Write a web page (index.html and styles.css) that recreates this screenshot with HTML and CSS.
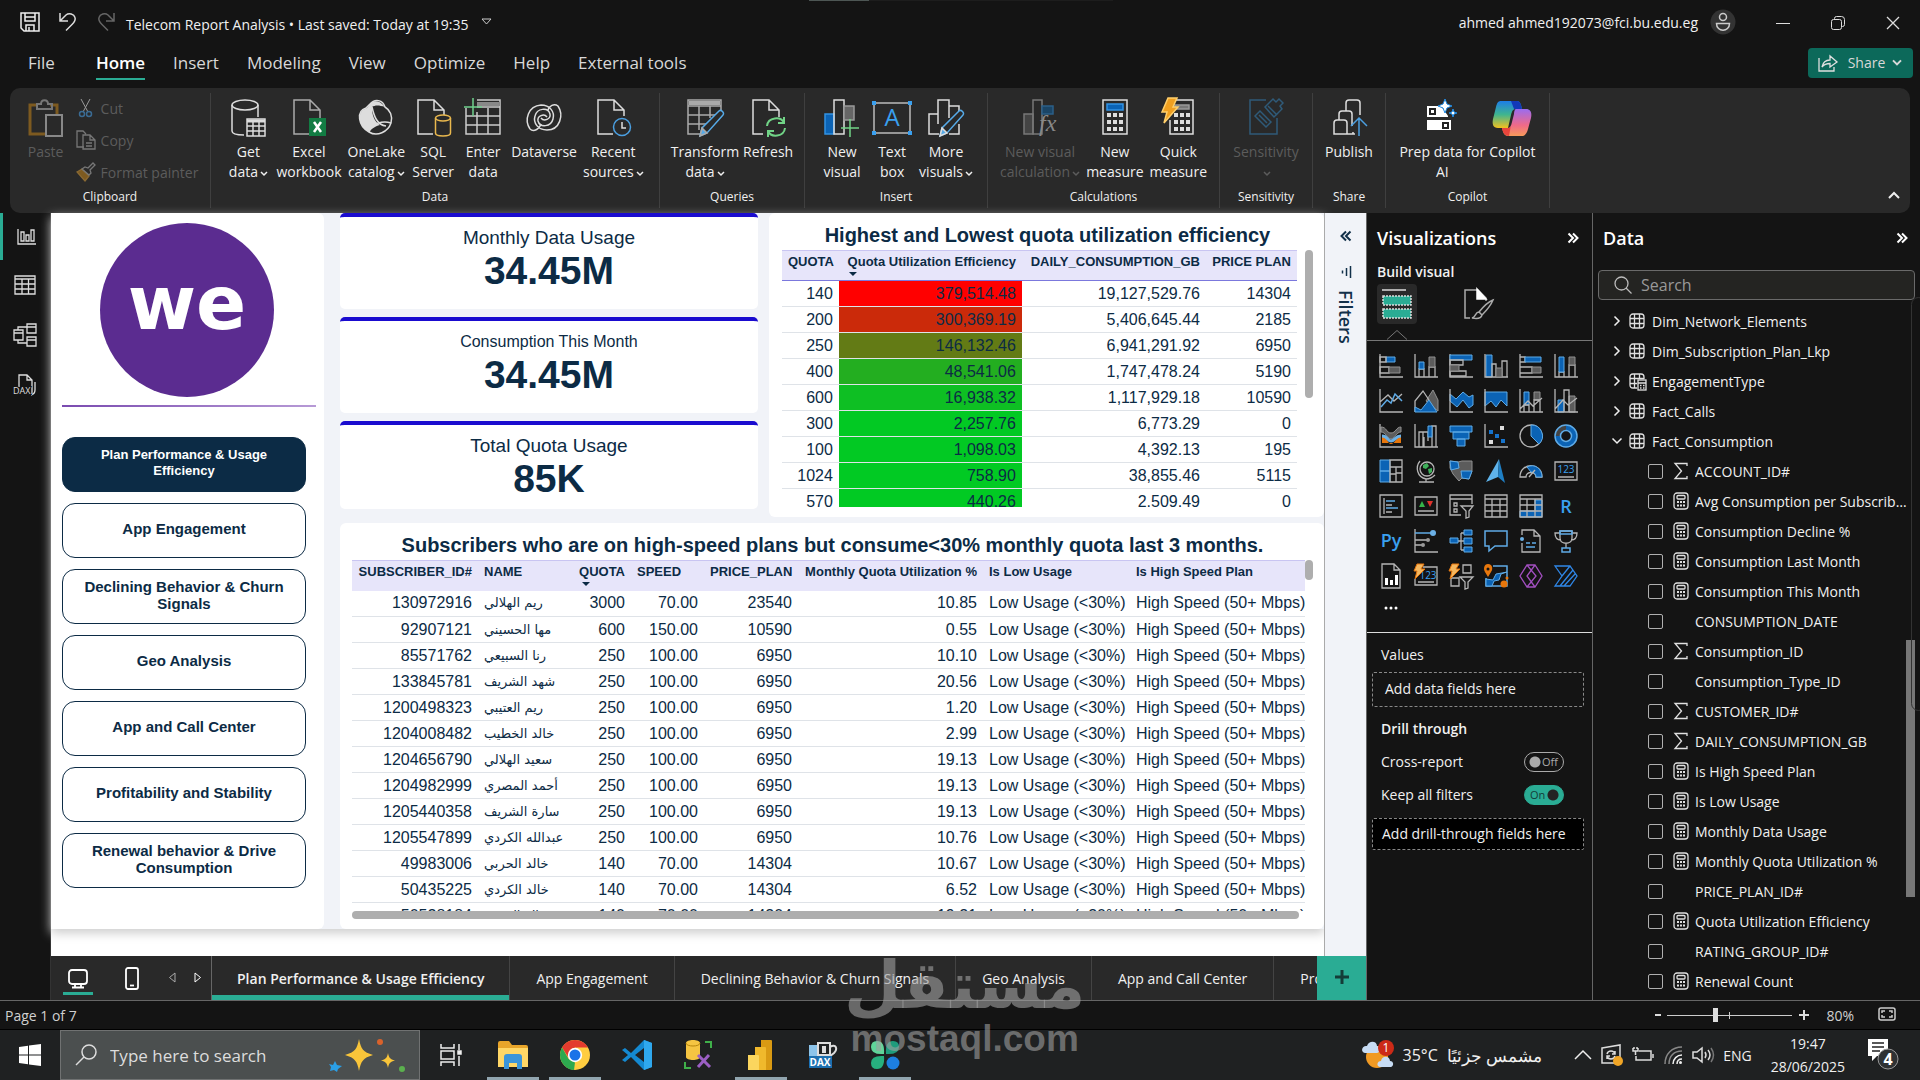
FILE: index.html
```html
<!DOCTYPE html>
<html lang="en">
<head>
  <meta charset="utf-8">
  <title>Telecom Report Analysis</title>
  <meta name="viewport" content="width=device-width, initial-scale=1">
  <link rel="stylesheet" href="styles.css">
</head>
<body>
  <!-- Shared icons -->
  <svg class="defs" width="0" height="0">
    <symbol id="chev" viewBox="0 0 8 6"><path d="M1 1l3 3 3-3" fill="none" stroke="currentColor" stroke-width="1.5"/></symbol>
    <symbol id="dbl" viewBox="0 0 12 12"><path d="M1.5 1.5L6 6l-4.500 4.500M6 1.500L10.500 6 6 10.500" fill="none" stroke="currentColor" stroke-width="2"/></symbol>
    <symbol id="arrow" viewBox="0 0 8 12"><path d="M1.500 1.500L6 6l-4.500 4.500" fill="none" stroke="currentColor" stroke-width="1.500"/></symbol>
    <symbol id="tbl" viewBox="0 0 16 16"><rect x="1" y="1" width="14" height="14" rx="3"/><path d="M5.500 1v14M10.500 1v14M1 5.500h14M1 10.500h14"/></symbol>
    <symbol id="calc" viewBox="0 0 16 18"><rect x="1" y="1" width="14" height="16" rx="3"/><rect x="4" y="3.500" width="8" height="3.500" rx="1"/><path d="M4 10h2M7 10h2M10 10h2M4 13.500h2M7 13.500h2M10 13.500h2" stroke-width="2"/></symbol>
    <symbol id="sum" viewBox="0 0 16 18"><path d="M14 4V1.500H2L8.500 9 2 16.500h12V14"/></symbol>
  </svg>

  <header class="titlebar">
    <div class="quick">
      <button aria-label="Save"><svg width="20" height="20" viewBox="0 0 20 20" fill="none" stroke="#eee" stroke-width="1.5"><path d="M1 1h18v18H4l-3-3zM5 1v8h10V1M6 19v-6h8v6M9 15v4M5 5h10"/></svg></button>
      <button aria-label="Undo"><svg width="20" height="20" viewBox="0 0 20 20" fill="none" stroke="#ddd" stroke-width="1.5"><path d="M2 1v8h8M2 9l6-6c3-2.500 8-1 9 2.500 1 3-1 5-3 7l-6 6"/></svg></button>
      <button aria-label="Redo"><svg width="20" height="20" viewBox="0 0 20 20" fill="none" stroke="#666" stroke-width="1.5"><path d="M18 1v8h-8M18 9l-6-6C9 .500 4 2 3 5.500c-1 3 1 5 3 7l6 6"/></svg></button>
    </div>
    <div class="doc-name">Telecom Report Analysis • Last saved: Today at 19:35</div>
    <svg class="doc-caret" width="12" height="8" viewBox="0 0 12 8" fill="none" stroke="#ccc"><path d="M1 1h9L5.500 6z"/></svg>
    <div class="edge"></div>
    <div class="account">ahmed ahmed192073@fci.bu.edu.eg
      <svg width="26" height="26" viewBox="0 0 26 26" fill="none" stroke="#ccc" stroke-width="1.5"><circle cx="13" cy="13" r="12.500" fill="#333" stroke="none"/><circle cx="13" cy="8" r="3.500"/><path d="M6.500 14.500h13c0 9-13 9-13 0z"/></svg>
    </div>
    <div class="win">
      <button aria-label="Minimize"><svg width="14" height="14" viewBox="0 0 14 14" stroke="#ddd"><path d="M0 7.500h14"/></svg></button>
      <button aria-label="Restore"><svg width="14" height="14" viewBox="0 0 14 14" fill="none" stroke="#ddd"><rect x=".5" y="3.500" width="10" height="10" rx="2"/><path d="M3.500 3.500V2.500q0-2 2-2h5q3 0 3 3v5q0 2-2 2h-1"/></svg></button>
      <button aria-label="Close"><svg width="14" height="14" viewBox="0 0 14 14" stroke="#ddd" stroke-width="1.3"><path d="M1 1l12 12M13 1L1 13"/></svg></button>
    </div>
  </header>

  <nav class="menu">
    <a href="#">File</a>
    <a href="#" class="on">Home</a>
    <a href="#">Insert</a>
    <a href="#">Modeling</a>
    <a href="#">View</a>
    <a href="#">Optimize</a>
    <a href="#">Help</a>
    <a href="#">External tools</a>
    <button class="share"><svg width="20" height="18" viewBox="0 0 20 18" fill="none" stroke="#e0e0e0" stroke-width="1.300"><path d="M1 4v13h15v-4M4 13c1-5 4-7 8-7V2l7 6-7 5V9.500c-4 0-6 1-8 3.500z"/></svg>Share<svg width="12" height="8"><use href="#chev"/></svg></button>
  </nav>

  <div class="ribbon">
    <section class="group g-clip">
      <div class="items">
        <button class="rb off"><svg width="36" height="40" viewBox="0 0 36 40" fill="none" stroke-width="2"><path d="M8 7H2v29h16M22 7h7v9" stroke="#7d5a20" stroke-width="3"/><path d="M9 11V6h4c0-5 7-5 7 0h4v5z" stroke="#777"/><rect x="18" y="17" width="16" height="21" stroke="#888"/></svg>Paste</button>
        <div class="stack">
          <button class="off"><svg width="16" height="20" viewBox="0 0 16 20" fill="none" stroke="#999"><path d="M3 1l7 13M12 1L5 14"/><g stroke="#3a6b93" stroke-width="1.500"><circle cx="4" cy="16" r="2.500"/><circle cx="11" cy="16" r="2.500"/></g></svg>Cut</button>
          <button class="off"><svg width="20" height="20" viewBox="0 0 20 20" fill="none" stroke="#777" stroke-width="1.300"><path d="M8 17H1V1h6l3 3M7 5h7l5 5v9H7zM14 5v5h5M10 13h6M10 16h6"/></svg>Copy</button>
          <button class="off"><svg width="20" height="20" viewBox="0 0 20 20" fill="none" stroke="#777" stroke-width="1.300"><path d="M1 10l5-3 7 7-4 5z" fill="#7d5a20" stroke="#8a6a34"/><path d="M6 7l3-2 3 1 5-5 2 2-5 5 1 3-2 2z"/></svg>Format painter</button>
        </div>
      </div>
      <h2>Clipboard</h2>
    </section>
    <section class="group g-data">
      <div class="items">
        <button class="rb"><svg width="36" height="40" viewBox="0 0 36 40" fill="none" stroke="#ddd" stroke-width="1.500"><ellipse cx="15" cy="7" rx="13" ry="5"/><path d="M2 7v26c0 3 6 4 12 4M28 7v12"/><rect x="17" y="21" width="18" height="17"/><path d="M17 23h18" stroke-width="3"/><path d="M17 28h18M17 33h18M23 24v14M29 24v14"/></svg><span>Get<br>data<svg class="dn"><use href="#chev"/></svg></span></button>
        <button class="rb"><svg width="36" height="40" viewBox="0 0 36 40" fill="none" stroke="#aaa" stroke-width="1.500"><path d="M18 36H3V2h16l10 10v8M19 2v10h10"/><rect x="18" y="20" width="17" height="18" fill="#127c43" stroke="none"/><path d="M23 24l7 10M30 24l-7 10" stroke="#fff" stroke-width="2.500"/></svg><span>Excel<br>workbook</span></button>
        <button class="rb"><svg width="36" height="40" viewBox="0 0 36 40" fill="none" stroke="#ddd" stroke-width="1.500"><path d="M12 6C17 0 25 2 27 9c5 3 8 9 6 16-3 9-14 14-22 9C0 28-2 13 8 10z"/><path d="M12 6c3-4 10-4 15 3-6-2-10-2-13 0 0 8 2 14 8 18-5 1-10 5-11 7C0 28-2 13 9 10z" fill="#ddd" stroke="none"/><path d="M14 9c2 9 5 18 14 19M11 34c3-8 13-12 22-9"/></svg><span>OneLake<br>catalog<svg class="dn"><use href="#chev"/></svg></span></button>
        <button class="rb"><svg width="36" height="40" viewBox="0 0 36 40" fill="none" stroke="#ddd" stroke-width="1.500"><path d="M18 36H3V2h16l10 10v5M19 2v10h10"/><g stroke="#e9b84e"><ellipse cx="28" cy="20" rx="7.500" ry="3"/><path d="M20.500 20v15c0 4 15 4 15 0V20"/></g></svg><span>SQL<br>Server</span></button>
        <button class="rb"><svg width="36" height="40" viewBox="0 0 36 40" fill="none" stroke="#ccc" stroke-width="1.500"><path d="M1 10v26h34V2H12M1 18h34M1 27h34M12 14v22M23 10v26M12 9h23"/><path d="M12 4h23v4H12z" fill="#888" stroke="none"/><path d="M8 0v18M-1 9h18" stroke="#6fd08c"/></svg><span>Enter<br>data</span></button>
        <button class="rb"><svg width="36" height="40" viewBox="0 0 36 40" fill="none" stroke="#ddd" stroke-width="1.500"><path d="M4 31C-2 22 2 8 15 7c9 0 14 7 12 14-2 8-13 9-15 2-1-5 6-8 9-4"/><path d="M32 8c6 9 2 24-11 24-9 0-14-7-12-14 2-8 13-9 15-2 1 5-6 8-9 4M4 31c4 4 10-1 11-5M32 8c-4-3-9 0-10 4"/></svg><span>Dataverse</span></button>
        <button class="rb"><svg width="36" height="40" viewBox="0 0 36 40" fill="none" stroke="#ddd" stroke-width="1.500"><path d="M18 36H3V2h16l10 10v6M19 2v10h10"/><circle cx="27" cy="29" r="8.500" stroke="#4b9fe0"/><path d="M27 24v6h4"/></svg><span>Recent<br>sources<svg class="dn"><use href="#chev"/></svg></span></button>
      </div>
      <h2>Data</h2>
    </section>
    <section class="group g-query">
      <div class="items">
        <button class="rb"><svg width="38" height="40" viewBox="0 0 38 40" fill="none" stroke="#aaa" stroke-width="1.500"><path d="M14 36H2V2h33v10M2 8h33M2 17h27M2 26h19M13 8v24M24 8v12"/><path d="M3 3h31v4H3z" fill="#aaa" stroke="none"/><path d="M14 38l2-8 17-17c2-2 6 2 4 4L21 35z" stroke="#56aae8" fill="#292929"/><path d="M14 38l2-8 5 5z" fill="#56aae8"/></svg><span>Transform<br>data<svg class="dn"><use href="#chev"/></svg></span></button>
        <button class="rb"><svg width="36" height="40" viewBox="0 0 36 40" fill="none" stroke="#ddd" stroke-width="1.500"><path d="M13 36H3V2h16l10 10v7M19 2v10h10"/><path d="M17 28c1-9 14-10 17-3M34 19v6h-6M35 30c-1 9-14 10-17 3M18 39v-6h6" stroke="#71d487" stroke-width="2"/></svg><span>Refresh</span></button>
      </div>
      <h2>Queries</h2>
    </section>
    <section class="group g-insert">
      <div class="items">
        <button class="rb"><svg width="38" height="40" viewBox="0 0 38 40" fill="none" stroke="#ddd" stroke-width="1.500"><path d="M2 16h9v20H2z" fill="#0b63b5" stroke="#3293e3"/><path d="M11 36V2h10v34z"/><path d="M21 8h10v14H21z" fill="#666" stroke="#999"/><path d="M27 21v18M18 30h18" stroke="#71d487"/></svg><span>New<br>visual</span></button>
        <button class="rb"><svg width="40" height="40" viewBox="0 0 40 40" fill="none" stroke="#bbb" stroke-width="1.500"><path d="M2 5h36v30H2z"/><path d="M0 3h4v4H0zM36 3h4v4h-4zM0 33h4v4H0zM36 33h4v4h-4z" fill="#3aa0ef" stroke="none"/><text x="20" y="28" text-anchor="middle" class="box-a">A</text></svg><span>Text<br>box</span></button>
        <button class="rb"><svg width="38" height="40" viewBox="0 0 38 40" fill="none" stroke="#ddd" stroke-width="1.500"><path d="M12 36H2V16h9M11 26V2h11v18M22 8h10v5M32 26v10H22"/><path d="M13 38l2-8 17-17c2-2 6 2 4 4L20 35z" stroke="#56aae8" fill="#292929"/><path d="M13 38l2-8 5 5z" fill="#56aae8"/></svg><span>More<br>visuals<svg class="dn"><use href="#chev"/></svg></span></button>
      </div>
      <h2>Insert</h2>
    </section>
    <section class="group g-calc">
      <div class="items">
        <button class="rb off"><svg width="36" height="40" viewBox="0 0 36 40" fill="none" stroke="#777" stroke-width="1.500"><path d="M2 16h9v20H2z" fill="#444"/><path d="M11 36V2h9v34z"/><path d="M20 8h11v8H20z" fill="#1b4566" stroke="#2b5f88"/><text x="17" y="33" class="fx">fx</text></svg><span>New visual<br>calculation<svg class="dn"><use href="#chev"/></svg></span></button>
        <button class="rb"><svg width="28" height="40" viewBox="0 0 28 40" fill="none" stroke="#ddd" stroke-width="1.500"><path d="M2 2h24v34H2z"/><path d="M6 6h16v6H6z" fill="#0b63b5" stroke="#3293e3"/><path d="M6 17h16M6 24h16M6 31h16" stroke-width="4" stroke-dasharray="4 2"/></svg><span>New<br>measure</span></button>
        <button class="rb"><svg width="34" height="40" viewBox="0 0 34 40" fill="none" stroke="#ddd" stroke-width="1.500"><path d="M10 2h22v34H9V22"/><path d="M14 7h14v4H14z" fill="#777" stroke="#999"/><path d="M13 17h16M13 24h16M13 31h16" stroke-width="4" stroke-dasharray="4 2"/><path d="M7 0h9l-4 9h5L3 25l3-11H1z" fill="#f0a020" stroke="#ffcf6b"/></svg><span>Quick<br>measure</span></button>
      </div>
      <h2>Calculations</h2>
    </section>
    <section class="group g-sens">
      <div class="items">
        <button class="rb off"><svg width="36" height="40" viewBox="0 0 36 40" fill="none" stroke="#2f5a78" stroke-width="1.500"><path d="M18 2H2v34h27V20M7 18l5-5 11 11-5 5zM17 9l8-8 3 3 3-3 4 4-3 3 2 3-8 8z"/><path d="M11 17l8 8M20 8l9 9"/></svg><span>Sensitivity<br><svg class="dn"><use href="#chev"/></svg></span></button>
      </div>
      <h2>Sensitivity</h2>
    </section>
    <section class="group g-share">
      <div class="items">
        <button class="rb"><svg width="36" height="40" viewBox="0 0 36 40" fill="none" stroke="#ddd" stroke-width="1.500"><path d="M24 36H3V25q0-3 3-3h7q3 0 3 3v11M8 22v-6q0-3 3-3h7q3 0 3 3v12M15 13V5q0-3 3-3h8q3 0 3 3v12M22 34v2"/><path d="M28 38V20M20 28l8-8 8 8" stroke="#4b9fe0"/></svg><span>Publish</span></button>
      </div>
      <h2>Share</h2>
    </section>
    <section class="group g-copilot">
      <div class="items">
        <button class="rb"><svg width="34" height="40" viewBox="0 0 34 40"><path d="M2 8h14l3 4 4 6v1H2zM2 22h24v10H2z" fill="#fff"/><path d="M5 11h5v5H5zM18 25h5v5h-5z" fill="#fff" stroke="#222" stroke-width="2"/><path d="M20 1l2 5 5 2-5 2-2 5-2-5-5-2 5-2zM28 11l1 3 3 1-3 1-1 3-1-3-3-1 3-1z" fill="#fff" stroke="#1b87e0"/></svg><span>Prep data for<br>AI</span></button>
        <button class="rb"><svg width="40" height="40" viewBox="0 0 40 40"><defs><linearGradient id="c1" x1="0" y1="0" x2="0" y2="1"><stop offset="0" stop-color="#1c7de8"/><stop offset=".5" stop-color="#3fb58f"/><stop offset="1" stop-color="#f2c21f"/></linearGradient><linearGradient id="c2" x1="0" y1="0" x2="0" y2="1"><stop offset="0" stop-color="#9a6cf0"/><stop offset=".6" stop-color="#f06a88"/><stop offset="1" stop-color="#f79a5a"/></linearGradient></defs><path d="M9 3h16c3 0 4 3 5 8h-6c-3 0-4 2-5 6l-3 13H6c-5 0-6-4-5-9l3-12c1-4 2-6 5-6z" fill="url(#c1)"/><path d="M19 3h6c3 0 4 3 5 8h-8z" fill="#1238b8"/><path d="M24 11h10c5 0 6 4 5 9l-3 11c-1 4-3 7-6 7H16c-4 0-5-4-6-8h6c2 0 3-2 4-6l2-8c0-3 1-5 2-5z" fill="url(#c2)"/><path d="M10 30h6c2 0 3-1 3-3l-2 11c-5 0-6-4-7-8z" fill="#e8453c"/></svg><span>Copilot</span></button>
      </div>
      <h2>Copilot</h2>
    </section>
    <button class="fold" aria-label="Collapse ribbon"><svg width="12" height="9" viewBox="0 0 12 9" fill="none" stroke="#eee" stroke-width="2"><path d="M1 7l5-5 5 5"/></svg></button>
  </div>

  <main class="work">
    <nav class="rail">
      <button class="on" aria-label="Report view"><svg width="20" height="16" viewBox="0 0 20 16" fill="none" stroke="#ddd" stroke-width="1.300"><path d="M1 0v15h18M4 3h3v9H4zM9 6h3v6H9zM14 1h3v11h-3z"/></svg></button>
      <button aria-label="Table view"><svg width="22" height="20" viewBox="0 0 22 20" fill="none" stroke="#ddd" stroke-width="1.300"><path d="M1 1h20v18H1zM1 4h20M1 9h20M1 14h20M8 4v15M14.500 4v15"/></svg></button>
      <button aria-label="Model view"><svg width="24" height="24" viewBox="0 0 24 24" fill="none" stroke="#ddd" stroke-width="1.300"><path d="M1 7h9v10H1zM1 10h9M14 1h9v9h-9zM14 4h9M14 14h9v9h-9zM14 17h9M5 7V4h9M5 17v3h9"/></svg></button>
      <button aria-label="DAX query view"><svg width="24" height="22" viewBox="0 0 24 22" fill="none" stroke="#ddd" stroke-width="1.300"><path d="M6 13V1h8l5 5v12q0 3-3 2M14 1v5h5M22 8v8q0 4-4 5"/><text x="0" y="20" class="dax">DAX</text></svg></button>
    </nav>

    <div class="center">
      <div class="stage">
        <div class="report">
          <aside class="side">
            <svg class="logo" width="174" height="174" viewBox="0 0 174 174"><circle cx="87" cy="87" r="87" fill="#5b2c90"/><text x="87" y="106" text-anchor="middle">we</text></svg>
            <div class="rule"></div>
            <button class="on">Plan Performance &amp; Usage Efficiency</button>
            <button>App Engagement</button>
            <button>Declining Behavior &amp; Churn Signals</button>
            <button>Geo Analysis</button>
            <button>App and Call Center</button>
            <button>Profitability and Stability</button>
            <button>Renewal behavior &amp; Drive Consumption</button>
          </aside>
          <div class="kpis">
            <div class="kpi"><h3>Monthly Data Usage</h3><p>34.45M</p></div>
            <div class="kpi"><h3 class="sm">Consumption This Month</h3><p>34.45M</p></div>
            <div class="kpi"><h3>Total Quota Usage</h3><p>85K</p></div>
          </div>
          <section class="card eff">
            <h2>Highest and Lowest quota utilization efficiency</h2>
            <div class="scroll">
              <div class="clip">
                <table>
                  <colgroup><col class="e1"><col class="e2"><col><col class="e4"></colgroup>
                  <thead><tr><th>QUOTA</th><th>Quota Utilization Efficiency<i></i></th><th>DAILY_CONSUMPTION_GB</th><th>PRICE PLAN</th></tr></thead>
                  <tbody>
                    <tr><td>140</td><td style="background:#ff0000">379,514.48</td><td>19,127,529.76</td><td>14304</td></tr>
                    <tr><td>200</td><td style="background:#cb2a0a">300,369.19</td><td>5,406,645.44</td><td>2185</td></tr>
                    <tr><td>250</td><td style="background:#637b15">146,132.46</td><td>6,941,291.92</td><td>6950</td></tr>
                    <tr><td>400</td><td style="background:#23ae20">48,541.06</td><td>1,747,478.24</td><td>5190</td></tr>
                    <tr><td>600</td><td style="background:#0ebf23">16,938.32</td><td>1,117,929.18</td><td>10590</td></tr>
                    <tr><td>300</td><td style="background:#02c923">2,257.76</td><td>6,773.29</td><td>0</td></tr>
                    <tr><td>100</td><td style="background:#02c923">1,098.03</td><td>4,392.13</td><td>195</td></tr>
                    <tr><td>1024</td><td style="background:#01ca23">758.90</td><td>38,855.46</td><td>5115</td></tr>
                    <tr><td>570</td><td style="background:#01ca23">440.26</td><td>2.509.49</td><td>0</td></tr>
                  </tbody>
                </table>
              </div>
              <div class="vbar"></div>
            </div>
          </section>
          <section class="card subs">
            <h2>Subscribers who are on high-speed plans but consume&lt;30% monthly quota last 3 months.</h2>
            <div class="scroll">
              <div class="clip">
                <table>
                  <colgroup><col class="s1"><col class="s2"><col class="s3"><col class="s4"><col class="s5"><col class="s6"><col class="s7"><col></colgroup>
                  <thead><tr><th>SUBSCRIBER_ID#</th><th class="l">NAME</th><th>QUOTA<i></i></th><th class="l">SPEED</th><th>PRICE_PLAN</th><th>Monthly Quota Utilization %</th><th class="l">Is Low Usage</th><th class="l">Is High Speed Plan</th></tr></thead>
                  <tbody>
                    <tr><td>130972916</td><td class="ar">ريم الهلالي</td><td>3000</td><td>70.00</td><td>23540</td><td>10.85</td><td class="l">Low Usage (&lt;30%)</td><td class="l">High Speed (50+ Mbps)</td></tr>
                    <tr><td>92907121</td><td class="ar">مها الحسيني</td><td>600</td><td>150.00</td><td>10590</td><td>0.55</td><td class="l">Low Usage (&lt;30%)</td><td class="l">High Speed (50+ Mbps)</td></tr>
                    <tr><td>85571762</td><td class="ar">رنا السبيعي</td><td>250</td><td>100.00</td><td>6950</td><td>10.10</td><td class="l">Low Usage (&lt;30%)</td><td class="l">High Speed (50+ Mbps)</td></tr>
                    <tr><td>133845781</td><td class="ar">شهد الشريف</td><td>250</td><td>100.00</td><td>6950</td><td>20.56</td><td class="l">Low Usage (&lt;30%)</td><td class="l">High Speed (50+ Mbps)</td></tr>
                    <tr><td>1200498323</td><td class="ar">ريم العتيبي</td><td>250</td><td>100.00</td><td>6950</td><td>1.20</td><td class="l">Low Usage (&lt;30%)</td><td class="l">High Speed (50+ Mbps)</td></tr>
                    <tr><td>1204008482</td><td class="ar">خالد الخطيب</td><td>250</td><td>100.00</td><td>6950</td><td>2.99</td><td class="l">Low Usage (&lt;30%)</td><td class="l">High Speed (50+ Mbps)</td></tr>
                    <tr><td>1204656790</td><td class="ar">سعيد الهلالي</td><td>250</td><td>100.00</td><td>6950</td><td>19.13</td><td class="l">Low Usage (&lt;30%)</td><td class="l">High Speed (50+ Mbps)</td></tr>
                    <tr><td>1204982999</td><td class="ar">أحمد المصري</td><td>250</td><td>100.00</td><td>6950</td><td>19.13</td><td class="l">Low Usage (&lt;30%)</td><td class="l">High Speed (50+ Mbps)</td></tr>
                    <tr><td>1205440358</td><td class="ar">سارة الشريف</td><td>250</td><td>100.00</td><td>6950</td><td>19.13</td><td class="l">Low Usage (&lt;30%)</td><td class="l">High Speed (50+ Mbps)</td></tr>
                    <tr><td>1205547899</td><td class="ar">عبدالله الكردي</td><td>250</td><td>100.00</td><td>6950</td><td>10.76</td><td class="l">Low Usage (&lt;30%)</td><td class="l">High Speed (50+ Mbps)</td></tr>
                    <tr><td>49983006</td><td class="ar">خالد الحربي</td><td>140</td><td>70.00</td><td>14304</td><td>10.67</td><td class="l">Low Usage (&lt;30%)</td><td class="l">High Speed (50+ Mbps)</td></tr>
                    <tr><td>50435225</td><td class="ar">خالد الكردي</td><td>140</td><td>70.00</td><td>14304</td><td>6.52</td><td class="l">Low Usage (&lt;30%)</td><td class="l">High Speed (50+ Mbps)</td></tr>
                    <tr><td>50528184</td><td class="ar">خالد العتيبي</td><td>140</td><td>70.00</td><td>14304</td><td>19.21</td><td class="l">Low Usage (&lt;30%)</td><td class="l">High Speed (50+ Mbps)</td></tr>
                  </tbody>
                </table>
              </div>
              <div class="vbar"></div>
            </div>
            <div class="hbar"></div>
          </section>
        </div>
        <div class="filters">
          <svg class="flip" width="12" height="12"><use href="#dbl"/></svg>
          <svg width="14" height="12" viewBox="0 0 14 12" stroke="#12304a" stroke-width="1.500"><path d="M11.500 0v12M7.500 2v8M3.500 4.500v3"/></svg>
          <span>Filters</span>
        </div>
      </div>
      <div class="pages">
        <button class="view on" aria-label="Desktop layout"><svg width="20" height="20" viewBox="0 0 20 20" fill="none" stroke="#fff" stroke-width="1.800"><rect x="1" y="1" width="18" height="14" rx="3"/><path d="M7 15v3M13 15v3M4 18.500h12"/></svg></button>
        <button class="view" aria-label="Mobile layout"><svg width="14" height="23" viewBox="0 0 14 23" fill="none" stroke="#fff" stroke-width="1.800"><rect x="1" y="1" width="12" height="21" rx="2"/><path d="M5 18.500h4"/></svg></button>
        <button class="step" aria-label="Previous page"><svg width="8" height="12" viewBox="0 0 8 12" fill="none" stroke="#aaa"><path d="M7 1v9L1.500 5.500z"/></svg></button>
        <button class="step" aria-label="Next page"><svg width="8" height="12" viewBox="0 0 8 12" fill="none" stroke="#fff"><path d="M1 1v9l5.500-4.500z"/></svg></button>
        <div class="tabs">
          <button class="on">Plan Performance &amp; Usage Efficiency</button>
          <button>App Engagement</button>
          <button>Declining Behavior &amp; Churn Signals</button>
          <button>Geo Analysis</button>
          <button>App and Call Center</button>
          <button>Profitability and Stability</button>
        </div>
        <button class="add" aria-label="New page"><svg width="14" height="14" viewBox="0 0 14 14" stroke="#143d38" stroke-width="3"><path d="M7 0v14M0 7h14"/></svg></button>
      </div>
    </div>

    <section class="pane viz">
      <header><h2>Visualizations</h2><svg width="12" height="12"><use href="#dbl"/></svg></header>
      <h3>Build visual</h3>
      <div class="modes">
        <button class="on" aria-label="Build visual"><svg width="30" height="32" viewBox="0 0 30 32" fill="#2aac94" stroke="#ddd" stroke-width="1.500"><path d="M0 2h24"/><g stroke-dasharray="2 1"><rect x="1" y="8" width="28" height="9"/><rect x="1" y="21" width="28" height="9"/></g></svg></button>
        <button aria-label="Format page"><svg width="30" height="32" viewBox="0 0 30 32" fill="none" stroke="#aaa" stroke-width="1.500"><path d="M6 30H1V2h13l8 8v3"/><path d="M13 1v10h9z" fill="#fff" stroke="#fff"/><path d="M29 12c-5 2-10 7-14 12l3 3c5-5 9-10 11-15zM15 24c-4 0-3 5-7 6 5 1 9 1 10-3z"/></svg></button>
      </div>
      <svg class="tick" width="20" height="10" viewBox="0 0 20 10" fill="#141414" stroke="#777"><path d="M0 9.500L10 .500l10 9"/></svg>
      <div class="gallery">
        <button><svg viewBox="0 0 24 24"><path class="g" d="M1 0v23h23"/><path class="b" d="M7 3h9v5H7z"/><path class="g" d="M1 3h6v5H1zM1 13h9v6H1z"/><path class="d" d="M10 13h11v6H10z"/></svg></button>
        <button><svg viewBox="0 0 24 24"><path class="g" d="M1 0v23h23M5 15h5v8H5zM15 13h6v10h-6z"/><path class="b" d="M5 8h5v7H5z"/><path class="d" d="M15 3h6v10h-6z"/></svg></button>
        <button><svg viewBox="0 0 24 24"><path class="g" d="M1 0v23h23"/><path class="b" d="M1 1h22v5H1z"/><path class="g" d="M1 6h13v5H1zM1 17h16v5H1z"/><path class="d" d="M1 11h9v6H1z"/></svg></button>
        <button><svg viewBox="0 0 24 24"><path class="b" d="M2 1h6v22H2z"/><path class="g" d="M1 0v23h23M8 10h4v13H8zM18 7h5v16h-5z"/><path class="d" d="M12 14h6v9h-6z"/></svg></button>
        <button><svg viewBox="0 0 24 24"><path class="g" d="M1 0v23h23M1 3h5v5H1zM1 13h12v6H1z"/><path class="b" d="M6 3h16v5H6z"/><path class="d" d="M13 13h9v6h-9z"/></svg></button>
        <button><svg viewBox="0 0 24 24"><path class="g" d="M1 0v23h23M5 18h5v5H5zM15 11h6v12h-6z"/><path class="b" d="M5 3h5v15H5z"/><path class="d" d="M15 3h6v8h-6z"/></svg></button>

        <button><svg viewBox="0 0 24 24"><path class="g" d="M1 0v23h23M1 13l8-7 6 6 8-7"/><path class="n" d="M2 18l6-7 4 3 4-9 7 7"/></svg></button>
        <button><svg viewBox="0 0 24 24"><path class="d" d="M12 12l7-11 5 10v11z"/><path class="g" d="M1 23V12L9 2l6 9"/><path class="b" d="M1 18l6 3 8-10 8 12H1z"/></svg></button>
        <button><svg viewBox="0 0 24 24"><path class="b" d="M1 5l6 5 7-7 6 5 4-2v10l-4 3-6-8-6 7-7-6z"/><path class="g" d="M1 0v23h23"/></svg></button>
        <button><svg viewBox="0 0 24 24"><path class="b" d="M1 3h22v14l-6-6-5 7-5-6-6 5z"/><path class="g" d="M1 0v23h23"/></svg></button>
        <button><svg viewBox="0 0 24 24"><path class="b" d="M5 3h5v13H5z"/><path class="d" d="M15 3h6v8h-6z"/><path class="g" d="M1 0v23h23M5 16h5v7H5zM15 11h6v12h-6zM1 20l8-8 5 5 9-8"/></svg></button>
        <button><svg viewBox="0 0 24 24"><path class="b" d="M4 11h6v12H4z"/><path class="d" d="M15 7h6v16h-6z"/><path class="g" d="M1 0v23h23M10 1h5v22h-5zM1 20l8-9 5 5 9-7"/></svg></button>

        <button><svg viewBox="0 0 24 24"><path d="M3 12c6 0 5 8 9 8s4-6 10-8v7H3z" fill="#e8770c"/><path class="d" d="M2 3c6 0 5 6 10 6s5-6 10-6v5c-5 0-6 7-10 7S7 8 2 8z"/><path d="M3 12c6 0 5 5 9 5s4-5 10-5" stroke="#6bb0e6" stroke-width="3" fill="none"/><path class="g" d="M1 0v23h23"/></svg></button>
        <button><svg viewBox="0 0 24 24"><path class="g" d="M1 0v23h23M5 8h4v15H5zM9 8h5v9M18 2h4v21h-4zM10 13v10"/><path class="b" d="M14 2h4v11h-4z"/></svg></button>
        <button><svg viewBox="0 0 24 24"><path class="b" d="M1 2h22v6H1zM4 8h16v7H4zM8 15h8v7H8z"/></svg></button>
        <button><svg viewBox="0 0 24 24"><path class="g" d="M1 0v23h23"/><path d="M5 6h4v4H5zM11 10h4v4h-4zM17 15h4v4h-4z" fill="#1673cc"/><path d="M16 2h4v4h-4zM5 16h4v4H5z" fill="#ddd"/></svg></button>
        <button><svg viewBox="0 0 24 24"><circle class="g" cx="12" cy="12" r="11"/><path class="b" d="M12 1a11 11 0 0 1 8 19l-8-8z"/></svg></button>
        <button><svg viewBox="0 0 24 24"><circle cx="12" cy="12" r="8.500" fill="none" stroke="#0b63b5" stroke-width="5"/><path d="M12 3.500A8.500 8.500 0 0 0 3.500 12" fill="none" stroke="#444" stroke-width="5"/><circle class="n" cx="12" cy="12" r="11"/><circle class="n" cx="12" cy="12" r="5.500"/></svg></button>

        <button><svg viewBox="0 0 24 24"><path class="b" d="M1 1h10v11H1zM1 12h10v11H1z"/><path class="g" d="M11 1h12v22H11zM11 8h12M17 8v15M11 15h6M17 14h6"/></svg></button>
        <button><svg viewBox="0 0 24 24"><circle class="g" cx="13" cy="10" r="7"/><path d="M9 6l4-2 2 3-3 3-3-1zM14 10l4-1v4l-3 2z" fill="#3fb05a"/><path class="g" d="M6 2C1 8 3 18 12 20c4 0 7-2 9-4M12 20v3M5 23h15"/></svg></button>
        <button><svg viewBox="0 0 24 24"><path class="d" d="M1 2l8 1 4-1h10v10l-3 8-7-1-3 3-6-7-3-6z"/><path class="b" d="M1 2l8 1 1 6-8 2zM12 12h11l-3 8-7-1z"/></svg></button>
        <button><svg viewBox="0 0 24 24"><path d="M15 0L2 23l12-5z" fill="#5fb4ec"/><path d="M15 0l6 24-7-6z" fill="#1f7fc4"/></svg></button>
        <button><svg viewBox="0 0 24 24"><path class="g" d="M1 18C1 3 23 3 23 18h-6c0-6-10-6-10 0z"/><path class="b" d="M8 8c8-4 15 2 15 10h-6c0-3-2-5-5-5z"/><path class="g" d="M10 18l6-7"/></svg></button>
        <button><svg viewBox="0 0 24 24"><path class="g" d="M1 3h22v18H1zM4 18h16"/><text x="12" y="14" class="num">123</text></svg></button>

        <button><svg viewBox="0 0 24 24"><path class="g" d="M1 1h22v22H1zM5 4v16M7 11h6M7 18h6"/><path class="n" d="M7 7h9M7 14h12" stroke-width="2.500"/></svg></button>
        <button><svg viewBox="0 0 24 24"><path class="g" d="M1 3h22v18H1zM4 17h16"/><path d="M5 13l3-6 3 6z" fill="#35b44a"/><path d="M13 7h6l-3 6z" fill="#e0322c"/></svg></button>
        <button><svg viewBox="0 0 24 24"><path class="g" d="M12 21H1V1h22v9M1 5h22M5 9h3v3H5zM5 15h3v3H5zM12 12h12l-4 5v6l-3 1v-7z"/></svg></button>
        <button><svg viewBox="0 0 24 24"><path class="g" d="M1 1h22v22H1zM1 5h22M1 11h22M1 17h22M8 5v18M16 5v18"/></svg></button>
        <button><svg viewBox="0 0 24 24"><path class="b" d="M16 6h7v17H1v-6h15z"/><path class="g" d="M1 1h22v22H1zM1 5h22M1 11h22M1 17h22M8 5v18M16 5v18"/></svg></button>
        <button><svg viewBox="0 0 24 24"><text x="12" y="19" class="lang">R</text></svg></button>

        <button><svg viewBox="0 0 24 24"><text x="12" y="18" class="lang">Py</text></svg></button>
        <button><svg viewBox="0 0 24 24"><path class="g" d="M1 0v23h23M1 11h13M1 16h8"/><path class="n" d="M1 4h16"/><circle cx="19" cy="4" r="3" fill="#6bb0e6"/><circle cx="14" cy="11" r="2" fill="#999"/><circle cx="9" cy="16" r="2" fill="#999"/></svg></button>
        <button><svg viewBox="0 0 24 24"><path class="g" d="M9 12h6M12 4v17M12 4h3M12 21h3"/><path class="b" d="M1 9h8v5H1zM15 1h8v5h-8zM15 9h8v6h-8zM15 18h8v5h-8z"/></svg></button>
        <button><svg viewBox="0 0 24 24"><path class="n" d="M1 2h22v15H11l-6 5v-5H1z"/></svg></button>
        <button><svg viewBox="0 0 24 24"><path class="g" d="M3 6V1h12l6 6v16H3v-9M15 1v6h6"/><path class="n" d="M7 14h4M13 14h4M7 18h9"/><circle cx="3" cy="10" r="2" fill="#6bb0e6"/></svg></button>
        <button><svg viewBox="0 0 24 24"><path class="g" d="M6 2h12v7c0 7-12 7-12 0zM6 4H1c0 5 2 7 6 7M18 4h5c0 5-2 7-6 7M12 14v5"/><path class="n" d="M6 2h12v3H6zM8 19h8v4H8z"/></svg></button>

        <button><svg viewBox="0 0 24 24"><path class="g" d="M3 0h12l6 6v18H3zM15 0v6h6" stroke-width="1.800"/><path d="M6 14h3v7H6zM11 16h3v5h-3zM16 11h3v10h-3z" fill="#fff"/></svg></button>
        <button><svg viewBox="0 0 24 24"><path class="g" d="M9 3h14v18H1v-6M4 18h16"/><text x="14" y="15" class="num">123</text><path d="M3 0h7L7 5h4L1 15l2-8H0z" fill="#f5b860" stroke="#e8770c"/></svg></button>
        <button><svg viewBox="0 0 24 24"><path class="g" d="M14 1h8v8h-8zM2 14v8h8v-8zM11 13h13l-5 5v6l-3 1v-7z"/><path d="M3 0h7L7 5h4L1 15l2-8H0z" fill="#f5b860" stroke="#e8770c"/></svg></button>
        <button><svg viewBox="0 0 24 24"><path class="n" d="M9 2h14v20H2v-8"/><path class="b" d="M23 8l-6 2-2 6-5 1-2 5H2v-7l7 1 3-6 6-1z"/><path d="M4 0c5 0 5 6 3 8l-3 5-3-5c-2-3-1-8 3-8z" fill="#e8770c"/><circle cx="4" cy="5" r="1.500" fill="#141414"/><circle cx="20" cy="20" r="3.500" fill="#e8770c"/><circle cx="23" cy="14" r="1.500" fill="#e8770c"/></svg></button>
        <button><svg viewBox="0 0 24 24" fill="none" stroke="#a24fc0" stroke-width="1.300"><path d="M8 1h8l7 11-7 11H8L1 12zM8 1l9 11-9 11M16 1L8 12l8 11"/></svg></button>
        <button><svg viewBox="0 0 24 24" fill="none" stroke="#2f86e6" stroke-width="1.300"><path d="M1 2h15l7 10-7 10H1l7-10zM8 12l8-10M6 22L19 6M10 22l11-12"/></svg></button>
        <button><svg viewBox="0 0 24 24" fill="#fff"><circle cx="7" cy="9" r="1.500"/><circle cx="12" cy="9" r="1.500"/><circle cx="17" cy="9" r="1.500"/></svg></button>
      </div>
      <div class="wells">
        <h4>Values</h4>
        <div class="well">Add data fields here</div>
        <h4 class="strong">Drill through</h4>
        <label>Cross-report<span class="toggle"><input type="checkbox"><b>Off</b></span></label>
        <label>Keep all filters<span class="toggle"><input type="checkbox" checked><b>On</b></span></label>
        <div class="well dark">Add drill-through fields here</div>
      </div>
    </section>

    <section class="pane data">
      <header><h2>Data</h2><svg width="12" height="12"><use href="#dbl"/></svg></header>
      <div class="find"><svg width="18" height="18" viewBox="0 0 18 18" fill="none" stroke="#bbb" stroke-width="1.300"><circle cx="7.500" cy="7.500" r="6.500"/><path d="M12 12l5.500 5.500"/></svg><input type="text" placeholder="Search" aria-label="Search fields"></div>
      <ul class="tree">
        <li><svg class="ar1"><use href="#arrow"/></svg><svg class="ic"><use href="#tbl"/></svg>Dim_Network_Elements</li>
        <li><svg class="ar1"><use href="#arrow"/></svg><svg class="ic"><use href="#tbl"/></svg>Dim_Subscription_Plan_Lkp</li>
        <li><svg class="ar1"><use href="#arrow"/></svg><svg class="ic" viewBox="0 0 16 16"><path d="M8 15H4q-3 0-3-3V4q0-3 3-3h8q3 0 3 3v2M1 5.500h14M1 10.500h7M5.500 1v14M10.500 1v5"/><rect x="9" y="7" width="8" height="10" fill="#141414"/><path d="M9 10h8M11 12.500h1.500M14 12.500h1.500M11 15h1.500M14 15h1.500"/></svg>EngagementType</li>
        <li><svg class="ar1"><use href="#arrow"/></svg><svg class="ic"><use href="#tbl"/></svg>Fact_Calls</li>
        <li><svg class="ar1 open"><use href="#arrow"/></svg><svg class="ic"><use href="#tbl"/></svg>Fact_Consumption</li>
      </ul>
      <div class="fields">
        <label><input type="checkbox"><svg><use href="#sum"/></svg><span>ACCOUNT_ID#</span></label>
        <label><input type="checkbox"><svg><use href="#calc"/></svg><span>Avg Consumption per Subscriber</span></label>
        <label><input type="checkbox"><svg><use href="#calc"/></svg><span>Consumption Decline %</span></label>
        <label><input type="checkbox"><svg><use href="#calc"/></svg><span>Consumption Last Month</span></label>
        <label><input type="checkbox"><svg><use href="#calc"/></svg><span>Consumption This Month</span></label>
        <label><input type="checkbox"><svg></svg><span>CONSUMPTION_DATE</span></label>
        <label><input type="checkbox"><svg><use href="#sum"/></svg><span>Consumption_ID</span></label>
        <label><input type="checkbox"><svg></svg><span>Consumption_Type_ID</span></label>
        <label><input type="checkbox"><svg><use href="#sum"/></svg><span>CUSTOMER_ID#</span></label>
        <label><input type="checkbox"><svg><use href="#sum"/></svg><span>DAILY_CONSUMPTION_GB</span></label>
        <label><input type="checkbox"><svg><use href="#calc"/></svg><span>Is High Speed Plan</span></label>
        <label><input type="checkbox"><svg><use href="#calc"/></svg><span>Is Low Usage</span></label>
        <label><input type="checkbox"><svg><use href="#calc"/></svg><span>Monthly Data Usage</span></label>
        <label><input type="checkbox"><svg><use href="#calc"/></svg><span>Monthly Quota Utilization %</span></label>
        <label><input type="checkbox"><svg></svg><span>PRICE_PLAN_ID#</span></label>
        <label><input type="checkbox"><svg><use href="#calc"/></svg><span>Quota Utilization Efficiency</span></label>
        <label><input type="checkbox"><svg></svg><span>RATING_GROUP_ID#</span></label>
        <label><input type="checkbox"><svg><use href="#calc"/></svg><span>Renewal Count</span></label>
      </div>
      <div class="thumb"></div>
      <div class="drawer"></div>
    </section>
  </main>

  <footer class="status">
    <span>Page 1 of 7</span>
    <div class="zoom">
      <button aria-label="Zoom out"><svg width="8" height="12" viewBox="0 0 8 12" stroke="#ddd" stroke-width="2"><path d="M1 6h6"/></svg></button>
      <input type="range" min="10" max="200" value="82" aria-label="Zoom">
      <button aria-label="Zoom in"><svg width="12" height="12" viewBox="0 0 12 12" stroke="#ddd" stroke-width="2"><path d="M1 6h10M6 1v10"/></svg></button>
      <span>80%</span>
      <button aria-label="Fit to page"><svg width="18" height="14" viewBox="0 0 18 14" fill="none" stroke="#ccc" stroke-width="1.500"><rect x="1" y="1" width="16" height="12" rx="2"/><path d="M4 6V4h3M14 6V4h-3M4 8v2h3M14 8v2h-3"/></svg></button>
    </div>
  </footer>

  <footer class="taskbar">
    <button class="start" aria-label="Start"><svg width="22" height="22" viewBox="0 0 22 22" fill="#fff"><path d="M0 3l9-1.300v8.800H0zM10 1.500L22 0v10.500H10zM0 11.500h9v8.800L0 19zM10 11.500h12V22l-12-1.500z"/></svg></button>
    <div class="search">
      <svg width="22" height="22" viewBox="0 0 22 22" fill="none" stroke="#ddd" stroke-width="1.500"><circle cx="14" cy="8" r="7"/><path d="M9 13l-8 8"/></svg>
      <input type="text" placeholder="Type here to search" aria-label="Type here to search">
      <svg width="78" height="34" viewBox="0 0 78 34"><path d="M30 1c2 10 4 13 14 16-10 3-12 6-14 16-2-10-4-13-14-16C26 14 28 11 30 1zM59 15c1 5 2 6 7 7.500-5 1.500-6 2.500-7 7.500-1-5-2-6-7-7.500 5-1.500 6-2.500 7-7.500z" fill="#f9c53a"/><path d="M6 23l2 4 5 1-4 3-1 3-3-2-4 1 1-4-2-3 4 1z" fill="#2b9fe6"/><circle cx="51" cy="4" r="3" fill="#d9622b"/><circle cx="73" cy="31" r="3" fill="#5bb04e"/></svg>
    </div>
    <div class="apps">
      <button aria-label="Task view"><svg width="22" height="22" viewBox="0 0 22 22" fill="none" stroke="#eee" stroke-width="1.500"><path d="M1 0v4h13V0M1 7h13v8H1zM1 22v-4h13v4M19 0v6M19 12v10"/><path d="M18 7h3v3h-3z" fill="#eee"/></svg></button>
      <button class="run" aria-label="File Explorer"><svg width="30" height="28" viewBox="0 0 30 28"><path d="M0 2q0-2 2-2h9l3 4h14q2 0 2 2v18H0z" fill="#e8a52a"/><path d="M0 7h30v19H0z" fill="#ffd766"/><path d="M6 28V16q0-3 3-3h12q3 0 3 3v12h-5v-6h-8v6z" fill="#3b95d9"/></svg></button>
      <button class="run" aria-label="Chrome"><svg width="30" height="30" viewBox="0 0 30 30"><circle cx="15" cy="15" r="15" fill="#ffcd40"/><path d="M15 0a15 15 0 0 1 13 7.500H15L9 18.500 2 7.500A15 15 0 0 1 15 0z" fill="#e33b2e"/><path d="M2 7.500l6.500 11.200L15 22.500 14 30A15 15 0 0 1 2 7.500z" fill="#2da94f"/><circle cx="15" cy="15" r="7.200" fill="#fff"/><circle cx="15" cy="15" r="5.500" fill="#1a73e8"/></svg></button>
      <button aria-label="Visual Studio Code"><svg width="30" height="30" viewBox="0 0 30 30"><path d="M22 0l8 3v24l-8 3L9 17l-6 5-3-2 6-5-6-5 3-2 6 5zM22 8l-9 7 9 7z" fill="#1489d1" fill-rule="evenodd"/><path d="M22 0l8 3v24l-8 3z" fill="#2fa8ee"/></svg></button>
      <button aria-label="Data tools"><svg width="30" height="30" viewBox="0 0 30 30"><path d="M2 3c0-4 14-4 14 0v14c0 4-14 4-14 0z" fill="#f5c542"/><path d="M2 3c0 4 14 4 14 0" stroke="#b8860b" fill="none"/><path d="M21 2h6v6M1 22v6h6" stroke="#3fb04a" stroke-width="2" fill="none"/><path d="M14 27l11-12M14 15l12 12" stroke="#9b5fc4" stroke-width="3"/></svg></button>
      <button class="run" aria-label="Power BI"><svg width="30" height="30" viewBox="0 0 30 30"><path d="M15 0h10q1 0 1 1v28q0 1-1 1H15z" fill="#d99a13"/><path d="M9 7h10q1 0 1 1v22H9z" fill="#f0b92c"/><path d="M2 15h10q1 0 1 1v14H2z" fill="#fbd65e"/></svg></button>
      <button aria-label="DAX Studio"><svg width="30" height="28" viewBox="0 0 30 28"><path d="M1 4h8v12H1z" fill="#8cc4ea"/><path d="M10 2h12v12H10zM22 6c6-4 8 2 4 6l-5 4" fill="none" stroke="#ddd" stroke-width="2"/><path d="M14 5h4v7h-4z" fill="#ddd"/><path d="M1 15h23v12H1z" fill="#1c6fb0"/><text x="12" y="25" class="dx">DAX</text></svg></button>
      <button class="run" aria-label="Clover"><svg width="30" height="30" viewBox="0 0 30 30"><path d="M1 7q0-6 6-6 8 0 7 13Q1 15 1 7z" fill="#5fd59a"/><path d="M29 7q0-6-6-6-8 0-7 13 13 1 13-7z" fill="#1f9b7c"/><path d="M1 23q0 6 6 6 8 0 7-13-13-1-13 7z" fill="#27b07f"/><circle cx="23" cy="23" r="6.500" fill="#1d7fe0"/></svg></button>
    </div>
    <div class="tray">
      <div class="weather">
        <svg width="32" height="30" viewBox="0 0 32 30"><circle cx="15" cy="17" r="11" fill="#f09a24"/><path d="M3 13c-5-1-3-8 2-7 2-6 10-5 10 0 4 0 4 6 0 7zM18 27c-4-1-3-6 1-6 1-6 9-5 9 0 4 0 4 5 1 6z" fill="#c7dcf4"/><circle cx="24" cy="8" r="8" fill="#cc2a17"/><text x="24" y="12" class="dot">1</text></svg>
        <span>35°C</span><span lang="ar" class="sky">مشمس جزئيًا</span>
      </div>
      <svg width="18" height="10" viewBox="0 0 18 10" fill="none" stroke="#eee" stroke-width="1.500"><path d="M1 9l8-8 8 8"/></svg>
      <svg width="22" height="22" viewBox="0 0 22 22" fill="none" stroke="#ddd" stroke-width="1.500"><path d="M1 4l18-3v18H1zM6 10c1-4 7-4 8 0M14 7v3h-3M14 12c-1 4-7 4-8 0M6 15v-3h3"/><circle cx="17" cy="17" r="5" fill="#f0a526" stroke="none"/></svg>
      <svg width="22" height="16" viewBox="0 0 22 16" fill="none" stroke="#ddd" stroke-width="1.500"><path d="M7 4h12v9H4V9M21 7v4M1 1v3h5V1M2 0v2M5 0v2M3.500 4v4"/></svg>
      <svg width="20" height="20" viewBox="0 0 20 20" fill="none" stroke="#888" stroke-width="1.500"><path d="M2 19C2 9 9 2 19 2M6 19C6 11 11 6 19 6"/><path d="M10 19c0-5 4-9 9-9M14 19c0-3 2-5 5-5" stroke="#eee"/><circle cx="17.500" cy="17.500" r="1.500" fill="#eee" stroke="none"/></svg>
      <svg width="22" height="18" viewBox="0 0 22 18" fill="none" stroke="#ddd" stroke-width="1.500"><path d="M1 6h4l5-4v14l-5-4H1zM13 6q2 3 0 6M16 4q4 5 0 10"/><path d="M19 2q5 7 0 14" stroke="#777"/></svg>
      <span>ENG</span>
      <div class="clock">19:47<br>28/06/2025</div>
      <div class="note"><svg width="34" height="36" viewBox="0 0 34 36"><path d="M0 4h20v17H9l-5 5v-5H0z" fill="#fff"/><path d="M4 8h12M4 12h12M4 16h8" stroke="#222" stroke-width="1.500"/><circle cx="20" cy="24" r="10" fill="#2f3234" stroke="#999"/><text x="20" y="30" class="four">4</text></svg></div>
    </div>
  </footer>

  <div class="mark"><span lang="ar">مستقل</span><span>mostaql.com</span></div>
</body>
</html>
```
FILE: styles.css
```css
* {
  box-sizing: border-box;
}
body {
  margin: 0;
  height: 100vh;
  display: flex;
  flex-direction: column;
  overflow: hidden;
  background: #141414;
  color: #f0f0f0;
  font-family: "Open Sans", "Noto Sans", sans-serif;
  font-size: 14px;
}
h2, h3, h4, p, ul {
  margin: 0;
  padding: 0;
}
button {
  padding: 0;
  border: 0;
  background: none;
  color: inherit;
  font: inherit;
}
a {
  color: inherit;
  text-decoration: none;
}
svg {
  flex: none;
  overflow: visible;
}
.defs {
  position: absolute;
}

/* Title bar */
.titlebar {
  display: flex;
  align-items: center;
  height: 44px;
  padding-left: 20px;
}
.quick {
  display: flex;
  gap: 18px;
  width: 106px;
}
.quick svg, .win svg {
  display: block;
}
.doc-name {
  padding-top: 4px;
}
.doc-caret {
  margin-left: 12px;
}
.edge {
  align-self: flex-start;
  flex: 1;
  margin: 0 346px 0 316px;
  height: 1px;
  background: linear-gradient(to right, #4d5654 60px, #1d1d1d 60px);
}
.account {
  display: flex;
  align-items: center;
  gap: 12px;
}
.win {
  display: flex;
  gap: 41px;
  padding: 2px 20px 0 40px;
}

/* Menu */
.menu {
  display: flex;
  align-items: center;
  gap: 28px;
  height: 44px;
  padding: 0 7px 6px 28px;
  font-size: 17px;
  line-height: 30px;
  color: #d8d8d8;
}
.menu .on {
  color: #fff;
  font-weight: 600;
  box-shadow: 0 2px #2aac94;
}
.menu a:first-child {
  margin-right: 13px;
}
.share {
  display: flex;
  align-items: center;
  justify-content: center;
  gap: 6px;
  width: 105px;
  height: 30px;
  margin-left: auto;
  border-radius: 4px;
  background: #0c695a;
  font-size: 14px;
}
.share svg:first-child {
  margin-right: 4px;
}

/* Ribbon */
.ribbon {
  display: flex;
  height: 125px;
  margin: 0 10px;
  padding: 5px 0;
  border-radius: 10px;
  background: #292929;
  flex: none;
}
.group {
  display: flex;
  flex-direction: column;
  align-items: center;
  padding-top: 5px;
  border-right: 1px solid #3f3f3f;
}
.group h2 {
  margin-top: 7px;
  font-size: 12px;
  font-weight: 400;
  line-height: 16px;
}
.items {
  display: flex;
  height: 84px;
}
.rb {
  display: flex;
  flex-direction: column;
  align-items: center;
  gap: 4px;
  min-width: 48px;
  padding: 0 2px;
  line-height: 20px;
  white-space: nowrap;
}
.dn {
  width: 8px;
  height: 6px;
  margin-left: 2px;
}
.off {
  color: #5c5c5c;
}
.stack {
  display: flex;
  flex-direction: column;
  justify-content: space-between;
  height: 84px;
  padding-left: 6px;
}
.stack button {
  display: flex;
  align-items: center;
  gap: 5px;
  height: 20px;
}
.stack svg {
  width: 20px;
}
.g-clip { width: 201px; }
.g-data { width: 449px; }
.g-data .items { gap: 2px; }
.g-query { width: 145px; }
.g-insert { width: 183px; }
.g-insert .rb { min-width: 50px; }
.g-calc { width: 232px; }
.g-calc .items { gap: 2px; }
.g-sens { width: 93px; }
.g-share { width: 73px; }
.g-copilot { width: 164px; }
.box-a {
  font-size: 24px;
  fill: #3aa0ef;
  stroke: none;
}
.fx {
  font: italic 24px "Liberation Serif", serif;
  fill: #888;
  stroke: none;
}
.fold {
  align-self: flex-end;
  margin: 0 10px 4px auto;
}

/* Work area */
.work {
  display: flex;
  flex: 1;
  min-height: 0;
}
.rail {
  display: flex;
  flex-direction: column;
  width: 51px;
  border-right: 1px solid #333;
  flex: none;
}
.rail button {
  display: flex;
  align-items: center;
  justify-content: center;
  height: 50px;
}
.rail .on {
  height: 47px;
  border-left: 3px solid #2aac94;
}
.dax {
  font-size: 9px;
  fill: #ddd;
  stroke: #141414;
  stroke-width: 2px;
  paint-order: stroke;
}
.center {
  display: flex;
  flex-direction: column;
  flex: 1;
  min-width: 0;
}
.stage {
  display: flex;
  flex: 1;
  min-height: 0;
  background: #fff;
}

/* Report page */
.report {
  flex: 1;
  display: grid;
  grid-template-columns: 273px 16fr 21fr;
  grid-template-rows: 304px 1fr;
  column-gap: 11px;
  row-gap: 6px;
  margin-bottom: 27px;
  background: #f1f3f8;
  box-shadow: 0 4px 10px #ccc;
  color: #0c2b45;
  font-family: "Liberation Sans", Arial, sans-serif;
}
.side {
  grid-row: span 2;
  display: flex;
  flex-direction: column;
  gap: 11px;
  padding: 10px 18px 0 11px;
  border-radius: 0 6px 6px 0;
  background: #fff;
}
.logo {
  margin: 0 32px 0 auto;
}
.logo text {
  font: bold 74px "DejaVu Sans", sans-serif;
  fill: #fff;
}
.rule {
  height: 2px;
  margin: -3px -10px 19px 0;
  background: linear-gradient(to right, #7a4bb0, #b79ad6);
}
.side button {
  height: 55px;
  padding: 0 14px 4px;
  border: 1px solid #0c2b45;
  border-radius: 13px;
  background: #fff;
  font-size: 15px;
  font-weight: bold;
  line-height: 17px;
}
.side .on {
  background: #0c2b45;
  color: #fff;
  font-size: 13px;
  line-height: 16px;
}
.kpis {
  display: flex;
  flex-direction: column;
  gap: 8px;
  margin-left: 5px;
  padding-bottom: 8px;
}
.kpi {
  height: 96px;
  border-top: 4px solid #1a0bcf;
  border-radius: 5px;
  background: #fff;
  text-align: center;
}
.kpi:last-child {
  flex: 1;
}
.kpi h3 {
  padding-top: 10px;
  font-size: 19px;
  font-weight: 400;
  line-height: 22px;
}
.kpi .sm {
  font-size: 16px;
}
.kpi p {
  font-size: 39px;
  font-weight: bold;
  line-height: 44px;
}
.card {
  display: flex;
  flex-direction: column;
  min-height: 0;
  border-radius: 6px;
  background: #fff;
}
.card h2 {
  height: 37px;
  padding-top: 10px;
  font-size: 20px;
  line-height: 24px;
  text-align: center;
}
.eff {
  padding: 0 11px 10px 13px;
}
.subs {
  grid-column: 2 / 4;
  margin-left: 5px;
  padding: 0 11px 10px 12px;
}
.scroll {
  display: flex;
  flex: 1;
  gap: 8px;
  min-height: 0;
}
.subs .scroll {
  gap: 0;
}
.clip {
  flex: 1;
  overflow: hidden;
}
.vbar {
  width: 8px;
  height: 148px;
  border-radius: 4px;
  background: #aeaeae;
}
.subs .vbar {
  height: 20px;
}
.hbar {
  height: 8px;
  margin-right: 14px;
  border-radius: 4px;
  background: #aeaeae;
}
table {
  width: 100%;
  table-layout: fixed;
  border-collapse: collapse;
  font-size: 16px;
}
th {
  height: 30px;
  padding: 3px 6px 0;
  border-top: 1px solid #c9c5f2;
  background: #e7e5fa;
  font-size: 13px;
  line-height: 15px;
  text-align: right;
  vertical-align: top;
  white-space: nowrap;
}
.eff th {
  border-bottom: 1px solid #7b78dd;
}
th i {
  display: block;
  width: 8px;
  height: 4px;
  margin: 3px 0 0 4px;
  background: #0c2b45;
  clip-path: polygon(0 0, 100% 0, 50% 100%);
}
td {
  height: 26px;
  padding: 0 6px;
  border-bottom: 1px solid #dfe3e8;
  line-height: 24px;
  text-align: right;
  white-space: nowrap;
}
.l, .ar {
  text-align: left;
}
.ar {
  font-family: "DejaVu Sans", sans-serif;
  font-size: 13px;
}
.e1 { width: 57px; }
.e2 { width: 183px; }
.e4 { width: 91px; }
.s1 { width: 126px; }
.s2 { width: 94px; }
.s3 { width: 59px; }
.s4 { width: 73px; }
.s5 { width: 94px; }
.s6 { width: 185px; }
.s7 { width: 147px; }

.filters {
  display: flex;
  flex-direction: column;
  align-items: center;
  width: 42px;
  padding-top: 17px;
  border-left: 1px solid #aaa;
  background: #f1f3f8;
  color: #12304a;
}
.filters svg {
  margin-bottom: 24px;
}
.filters svg + svg {
  margin: 0 0 12px;
}
.flip {
  transform: scaleX(-1);
}
.filters span {
  writing-mode: vertical-rl;
  font-size: 18px;
  font-weight: 600;
}

/* Page tabs */
.pages {
  display: flex;
  height: 44px;
  background: #292929;
}
.view {
  width: 54px;
}
.view.on {
  background: linear-gradient(#2aac94, #2aac94) center 36px / 30px 3px no-repeat;
}
.view svg {
  vertical-align: middle;
}
.step {
  width: 26px;
}
.tabs {
  display: flex;
  flex: 1;
  overflow: hidden;
  border-left: 1px solid #666;
}
.tabs button {
  padding: 0 26px;
  border-right: 1px solid #444;
  white-space: nowrap;
}
.tabs .on {
  padding: 0 25px;
  font-weight: 600;
  box-shadow: inset 0 -5px #2aac94;
}
.add {
  width: 49px;
  background: #2aac94;
}

/* Side panes */
.pane {
  flex: none;
  border-left: 1px solid #666;
}
.pane header {
  display: flex;
  align-items: center;
  justify-content: space-between;
  height: 50px;
  color: #fff;
}
.pane h2 {
  font-size: 18px;
  font-weight: 600;
}
.viz {
  width: 226px;
}
.viz header, .viz h3 {
  padding: 0 13px 0 10px;
}
.viz h3 {
  font-size: 14px;
  font-weight: 600;
  line-height: 17px;
}
.modes {
  display: flex;
  gap: 42px;
  padding: 4px 10px 0;
}
.modes button {
  width: 40px;
  height: 40px;
  border-radius: 4px;
}
.modes .on {
  background: #292929;
}
.modes svg {
  vertical-align: middle;
}
.tick {
  display: block;
  margin: 6px 0 0 20px;
}
.gallery {
  display: grid;
  grid-template-columns: repeat(6, 24px);
  grid-auto-rows: 24px;
  gap: 11px;
  padding: 13px 12px 9px;
  border-top: 1px solid #777;
  border-bottom: 1px solid #ddd;
}
.gallery svg {
  display: block;
  width: 24px;
  height: 24px;
}
.g {
  fill: none;
  stroke: #b5b5b5;
  stroke-width: 1.3px;
}
.b {
  fill: #0b63b5;
  stroke: #5fabe6;
  stroke-width: 1px;
}
.d {
  fill: #5c5c5c;
  stroke: #909090;
}
.n {
  fill: none;
  stroke: #5fabe6;
  stroke-width: 1.5px;
}
.num {
  font-size: 10px;
  fill: #3aa0ef;
  text-anchor: middle;
}
.lang {
  font-size: 18px;
  font-weight: 600;
  fill: #3aa0ef;
  text-anchor: middle;
}
.wells {
  padding: 10px 8px 0 5px;
}
.wells h4, .wells label {
  padding-left: 9px;
  font-weight: 400;
}
.wells h4 {
  line-height: 24px;
}
.wells .strong {
  margin-top: 10px;
  font-weight: 600;
}
.wells label {
  display: flex;
  justify-content: space-between;
  align-items: center;
  height: 33px;
  padding-right: 20px;
}
.strong + label {
  margin-top: 4px;
}
.well {
  height: 35px;
  margin-top: 5px;
  padding-left: 12px;
  border: 1px dashed #888;
  border-radius: 2px;
  line-height: 32px;
}
.well.dark {
  height: 32px;
  margin-top: 7px;
  padding-left: 9px;
  background: #000;
  line-height: 30px;
  white-space: nowrap;
}
.toggle {
  display: grid;
  align-items: center;
}
.toggle input, .toggle b {
  grid-area: 1 / 1;
}
.toggle input {
  appearance: none;
  width: 40px;
  height: 20px;
  margin: 0;
  border: 1px solid #aaa;
  border-radius: 10px;
  background: radial-gradient(circle at 10px 9px, #aaa 5px, transparent 6px);
}
.toggle input:checked {
  border-color: #2aac94;
  background: radial-gradient(circle at 28px 9px, #242424 5px, #2aac94 6px);
}
.toggle b {
  padding-left: 18px;
  font-size: 11px;
  font-weight: 400;
  color: #aaa;
}
.toggle :checked + b {
  padding-left: 6px;
  color: #143d38;
}

/* Data pane */
.data {
  position: relative;
  width: 328px;
  overflow: hidden;
}
.data header {
  padding: 0 12px 0 10px;
}
.find {
  display: flex;
  align-items: center;
  gap: 9px;
  height: 30px;
  margin: 7px 5px 6px;
  padding: 0 15px;
  border: 1px solid #6a6a6a;
  border-radius: 4px;
  background: #242422;
}
.find input, .search input {
  flex: 1;
  min-width: 0;
  padding: 0;
  border: 0;
  background: none;
  color: #ddd;
  font: inherit;
  font-size: 16px;
}
.find input::placeholder {
  color: #999;
}
.tree {
  list-style: none;
}
.tree li {
  display: flex;
  align-items: center;
  height: 30px;
  padding-left: 20px;
}
.ar1 {
  width: 8px;
  height: 12px;
  margin-right: 8px;
}
.open {
  transform: rotate(90deg);
}
.ic {
  width: 16px;
  height: 16px;
  margin-right: 7px;
}
.ic, .fields svg {
  fill: none;
  stroke: #e0e0e0;
  stroke-width: 1.3px;
}
.fields label {
  display: flex;
  align-items: center;
  height: 30px;
  padding: 0 12px 0 55px;
}
.fields input {
  appearance: none;
  flex: none;
  width: 15px;
  height: 15px;
  margin: 0 10px 0 0;
  border: 1px solid #b0b0b0;
  border-radius: 2px;
}
.fields svg {
  width: 16px;
  height: 18px;
  margin-right: 6px;
}
.fields span {
  overflow: hidden;
  text-overflow: ellipsis;
  white-space: nowrap;
}
.thumb {
  position: absolute;
  top: 427px;
  right: 5px;
  width: 9px;
  height: 257px;
  background: #777;
}
.drawer {
  position: absolute;
  top: 84px;
  right: -6px;
  width: 15px;
  height: 414px;
  border: 1px solid #333;
  border-radius: 8px;
}

/* Status bar */
.status {
  display: flex;
  align-items: center;
  justify-content: space-between;
  height: 30px;
  padding: 0 24px 0 5px;
  border-top: 1px solid #666;
  border-bottom: 1px solid #000;
  color: #d0d0d0;
  flex: none;
}
.zoom {
  display: flex;
  align-items: center;
}
.zoom input {
  appearance: none;
  width: 125px;
  height: 16px;
  margin: 0 6px 0 5px;
  background: linear-gradient(#ccc, #ccc) center / 100% 1px no-repeat, linear-gradient(#ccc, #ccc) 50% 50% / 1px 7px no-repeat;
}
.zoom input::-webkit-slider-thumb {
  appearance: none;
  width: 5px;
  height: 14px;
  background: #ddd;
}
.zoom span {
  margin: 0 24px 0 16px;
}

/* Taskbar */
.taskbar {
  display: flex;
  height: 50px;
  background: #1f2122;
  flex: none;
}
.start {
  width: 60px;
}
.start svg {
  vertical-align: middle;
}
.search {
  display: flex;
  align-items: center;
  gap: 13px;
  width: 360px;
  padding: 0 12px 0 14px;
  border: 1px solid #707272;
  background: #4b4f4f;
}
.search input {
  font-size: 17px;
}
.search input::placeholder {
  color: #ddd;
}
.apps {
  display: flex;
}
.apps button {
  display: flex;
  align-items: center;
  justify-content: center;
  width: 52px;
  margin: 0 5px;
}
.apps .run {
  box-shadow: inset 0 -3px #91a5af;
}
.dx {
  font-size: 10px;
  font-weight: bold;
  fill: #fff;
  text-anchor: middle;
}
.tray {
  display: flex;
  align-items: center;
  gap: 9px;
  margin-left: auto;
  padding-right: 18px;
}
.weather {
  display: flex;
  align-items: center;
  gap: 9px;
  margin-right: 23px;
  font-size: 16px;
}
.sky {
  font-size: 17px;
}
.clock {
  margin: 0 14px 0 10px;
  line-height: 23px;
  text-align: center;
}
.dot {
  font-size: 12px;
  fill: #fff;
  text-anchor: middle;
}
.four {
  font-size: 16px;
  font-weight: bold;
  fill: #fff;
  text-anchor: middle;
}

/* Watermark over the bottom bars */
.mark {
  position: absolute;
  left: 844px;
  bottom: 21px;
  display: flex;
  flex-direction: column;
  align-items: center;
  color: rgba(160, 160, 160, 0.6);
  font: bold 37px/40px "Liberation Sans", sans-serif;
  pointer-events: none;
}
.mark span:first-child {
  font: bold 66px/66px "DejaVu Sans", sans-serif;
}
```
